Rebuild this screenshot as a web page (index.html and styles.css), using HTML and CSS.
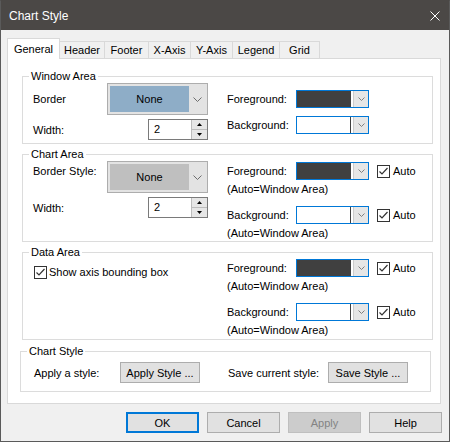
FILE: index.html
```html
<!DOCTYPE html>
<html>
<head>
<meta charset="utf-8">
<title>Chart Style</title>
<link rel="stylesheet" href="styles.css">
</head>
<body>
<div class="window">
  <div class="titlebar">
    <span class="title">Chart Style</span>
    <svg class="close" width="10" height="10" viewBox="0 0 10 10"><path d="M0.5 0.5 L9.5 9.5 M9.5 0.5 L0.5 9.5" stroke="#ffffff" stroke-width="1" fill="none"/></svg>
  </div>
  <div class="content">
    <div class="tabs">
      <div class="tab active t-general">General</div>
      <div class="tab t-header">Header</div>
      <div class="tab t-footer">Footer</div>
      <div class="tab t-x">X-Axis</div>
      <div class="tab t-y">Y-Axis</div>
      <div class="tab t-legend">Legend</div>
      <div class="tab t-grid">Grid</div>
    </div>
    <div class="panel">
      <fieldset class="group g-window">
        <legend>Window Area</legend>
        <div class="cols">
          <div class="left">
            <div class="row combo-row">
              <span class="lbl-l">Border</span>
              <div class="style-combo">
                <div class="swatch blue">None</div>
                <div class="chev-area"><svg width="9" height="5" viewBox="0 0 9 5"><path d="M0.5 0.5 L4.5 4.5 L8.5 0.5" fill="none" stroke="#6d6d6d"/></svg></div>
              </div>
            </div>
            <div class="row width-row">
              <span>Width:</span>
              <div class="spin">
                <span class="spin-val">2</span>
                <div class="spin-btns">
                  <div class="sb up"><svg width="5" height="3" viewBox="0 0 5 3"><path d="M2.5 0 L5 3 L0 3 Z" fill="#000"/></svg></div>
                  <div class="sb down"><svg width="5" height="3" viewBox="0 0 5 3"><path d="M0 0 L5 0 L2.5 3 Z" fill="#000"/></svg></div>
                </div>
              </div>
            </div>
          </div>
          <div class="right">
            <div class="crow">
              <span class="lbl-r">Foreground:</span>
              <div class="color-combo"><div class="cswatch dark"></div><div class="drop"><svg width="7" height="4" viewBox="0 0 7 4"><path d="M0.5 0.5 L3.5 3.5 L6.5 0.5" fill="none" stroke="#7f7f7f"/></svg></div></div>
            </div>
            <div class="crow w-second">
              <span class="lbl-r">Background:</span>
              <div class="color-combo"><div class="cswatch light"></div><div class="drop"><svg width="7" height="4" viewBox="0 0 7 4"><path d="M0.5 0.5 L3.5 3.5 L6.5 0.5" fill="none" stroke="#7f7f7f"/></svg></div></div>
            </div>
          </div>
        </div>
      </fieldset>

      <fieldset class="group g-chart">
        <legend>Chart Area</legend>
        <div class="cols">
          <div class="left">
            <div class="row combo-row top">
              <span class="lbl-l">Border Style:</span>
              <div class="style-combo">
                <div class="swatch gray">None</div>
                <div class="chev-area"><svg width="9" height="5" viewBox="0 0 9 5"><path d="M0.5 0.5 L4.5 4.5 L8.5 0.5" fill="none" stroke="#6d6d6d"/></svg></div>
              </div>
            </div>
            <div class="row width-row">
              <span>Width:</span>
              <div class="spin">
                <span class="spin-val">2</span>
                <div class="spin-btns">
                  <div class="sb up"><svg width="5" height="3" viewBox="0 0 5 3"><path d="M2.5 0 L5 3 L0 3 Z" fill="#000"/></svg></div>
                  <div class="sb down"><svg width="5" height="3" viewBox="0 0 5 3"><path d="M0 0 L5 0 L2.5 3 Z" fill="#000"/></svg></div>
                </div>
              </div>
            </div>
          </div>
          <div class="right">
            <div class="crow">
              <span class="lbl-r">Foreground:</span>
              <div class="color-combo"><div class="cswatch dark"></div><div class="drop"><svg width="7" height="4" viewBox="0 0 7 4"><path d="M0.5 0.5 L3.5 3.5 L6.5 0.5" fill="none" stroke="#7f7f7f"/></svg></div></div>
              <span class="chk"><svg width="11" height="11" viewBox="0 0 11 11"><path d="M1.5 5.5 L4 8 L9.5 2" fill="none" stroke="#333" stroke-width="1.2"/></svg></span>
              <span class="chk-lbl">Auto</span>
            </div>
            <div class="note">(Auto=Window Area)</div>
            <div class="crow second">
              <span class="lbl-r">Background:</span>
              <div class="color-combo"><div class="cswatch light"></div><div class="drop"><svg width="7" height="4" viewBox="0 0 7 4"><path d="M0.5 0.5 L3.5 3.5 L6.5 0.5" fill="none" stroke="#7f7f7f"/></svg></div></div>
              <span class="chk"><svg width="11" height="11" viewBox="0 0 11 11"><path d="M1.5 5.5 L4 8 L9.5 2" fill="none" stroke="#333" stroke-width="1.2"/></svg></span>
              <span class="chk-lbl">Auto</span>
            </div>
            <div class="note">(Auto=Window Area)</div>
          </div>
        </div>
      </fieldset>

      <fieldset class="group g-data">
        <legend>Data Area</legend>
        <div class="cols">
          <div class="left">
            <div class="row check-row">
              <span class="chk"><svg width="11" height="11" viewBox="0 0 11 11"><path d="M1.5 5.5 L4 8 L9.5 2" fill="none" stroke="#333" stroke-width="1.2"/></svg></span>
              <span class="chk-text">Show axis bounding box</span>
            </div>
          </div>
          <div class="right">
            <div class="crow">
              <span class="lbl-r">Foreground:</span>
              <div class="color-combo"><div class="cswatch dark"></div><div class="drop"><svg width="7" height="4" viewBox="0 0 7 4"><path d="M0.5 0.5 L3.5 3.5 L6.5 0.5" fill="none" stroke="#7f7f7f"/></svg></div></div>
              <span class="chk"><svg width="11" height="11" viewBox="0 0 11 11"><path d="M1.5 5.5 L4 8 L9.5 2" fill="none" stroke="#333" stroke-width="1.2"/></svg></span>
              <span class="chk-lbl">Auto</span>
            </div>
            <div class="note">(Auto=Window Area)</div>
            <div class="crow second">
              <span class="lbl-r">Background:</span>
              <div class="color-combo"><div class="cswatch light"></div><div class="drop"><svg width="7" height="4" viewBox="0 0 7 4"><path d="M0.5 0.5 L3.5 3.5 L6.5 0.5" fill="none" stroke="#7f7f7f"/></svg></div></div>
              <span class="chk"><svg width="11" height="11" viewBox="0 0 11 11"><path d="M1.5 5.5 L4 8 L9.5 2" fill="none" stroke="#333" stroke-width="1.2"/></svg></span>
              <span class="chk-lbl">Auto</span>
            </div>
            <div class="note">(Auto=Window Area)</div>
          </div>
        </div>
      </fieldset>

      <fieldset class="group g-style">
        <legend>Chart Style</legend>
        <div class="style-row">
          <span class="lbl-apply">Apply a style:</span>
          <button class="btn btn-sm">Apply Style ...</button>
          <span class="lbl-save">Save current style:</span>
          <button class="btn btn-sm">Save Style ...</button>
        </div>
      </fieldset>
    </div>
    <div class="buttons">
      <button class="btn btn-main default">OK</button>
      <button class="btn btn-main">Cancel</button>
      <button class="btn btn-main disabled">Apply</button>
      <button class="btn btn-main">Help</button>
    </div>
  </div>
</div>
</body>
</html>
```

FILE: styles.css
```css
* { box-sizing: border-box; }
html, body { margin: 0; padding: 0; }
body {
  width: 450px;
  height: 442px;
  overflow: hidden;
  background: #f0f0f0;
  font-family: "Liberation Sans", Arial, sans-serif;
  font-size: 11px;
  color: #000;
}
.window {
  width: 450px;
  height: 442px;
  border: 1px solid #5a5a5a;
  border-top-color: #4b4846;
  background: #f0f0f0;
  display: flex;
  flex-direction: column;
}
.titlebar {
  height: 29px;
  flex: none;
  background: #4b4846;
  color: #fff;
  display: flex;
  align-items: center;
  justify-content: space-between;
  padding: 0 9px 0 8px;
  font-size: 12px;
}
.close { display: block; }
.content { padding: 8px 8px 0 6px; }

.tabs { display: flex; align-items: flex-end; height: 20px; }
.tab {
  height: 17px;
  border: 1px solid #d9d9d9;
  border-bottom: none;
  margin-left: -1px;
  background: #f0f0f0;
  display: flex;
  align-items: center;
  justify-content: center;
  line-height: 15px;
}
.tab.active {
  height: 21px;
  margin-left: 0;
  margin-bottom: -1px;
  background: #fff;
  position: relative;
  z-index: 1;
}
.t-general { width: 53px; }
.t-header { width: 46px; }
.t-footer { width: 45px; }
.t-x { width: 43px; }
.t-y { width: 43px; }
.t-legend { width: 48px; }
.t-grid { width: 41px; }

.panel {
  height: 346px;
  background: #fff;
  border: 1px solid #d9d9d9;
  padding-top: 10px;
}

.group {
  margin: 0 0 0 14px;
  width: 411px;
  min-width: 0;
  border: 1px solid #dcdcdc;
  padding: 0 0 0 6px;
}
.group legend {
  padding: 0 2px;
  height: 14px;
  line-height: 14px;
}
.g-chart, .g-data { margin-top: 3px; }
.g-style { margin-top: 4px; margin-left: 12px; }

.cols { display: flex; }
.left { width: 198px; padding-left: 4px; }
.right { flex: 1; }
.row { display: flex; align-items: center; }
.combo-row { height: 32px; }
.combo-row.top { align-items: flex-start; }
.combo-row.top .lbl-l { padding-top: 2px; }
.lbl-l { width: 74px; line-height: 16px; }
.width-row { width: 175px; justify-content: space-between; margin-top: 4px; }
.g-window .left { padding-bottom: 3px; }

.style-combo {
  width: 101px;
  height: 32px;
  border: 1px solid #adadad;
  background: #e3e3e3;
  padding: 2px;
  display: flex;
  align-items: center;
}
.swatch {
  width: 79px;
  height: 26px;
  display: flex;
  align-items: center;
  justify-content: center;
}
.swatch.blue { background: #8eadc7; }
.swatch.gray { background: #bfbfbf; }
.chev-area { flex: 1; display: flex; justify-content: center; align-items: center; padding-left: 1px; }
.chev-area svg, .drop svg, .sb svg, .chk svg { display: block; }

.spin {
  width: 60px;
  height: 21px;
  border: 1px solid #7a7a7a;
  background: #fff;
  display: flex;
}
.spin-val { padding-left: 5px; line-height: 19px; }
.spin-btns {
  margin-left: auto;
  width: 16px;
  display: flex;
  flex-direction: column;
  background: #e6e6e6;
  border-left: 1px solid #bcbcbc;
}
.sb { flex: 1; display: flex; align-items: center; justify-content: center; }
.sb.down { border-top: 1px solid #bcbcbc; }

.crow { display: flex; align-items: center; height: 18px; }
.lbl-r { width: 69px; }
.g-window .right { padding-top: 7px; }
.w-second { margin-top: 8px; }
.g-chart .right { padding-top: 1px; }
.g-data .right { padding-bottom: 1px; }
.crow.second { margin-top: 9px; }
.note { line-height: 16px; margin-top: 1px; }

.color-combo {
  width: 73px;
  height: 18px;
  border: 1px solid #0078d7;
  background: #fff;
  display: flex;
}
.cswatch { width: 54px; height: 100%; }
.cswatch.dark { background: #404040; }
.cswatch.light { background: #fff; border-right: 1px solid #404040; }
.drop {
  margin-left: 2px;
  width: 15px;
  background: #e6e6e6;
  border-left: 1px solid #cccccc;
  display: flex;
  align-items: center;
  justify-content: center;
}

.chk {
  width: 13px;
  height: 13px;
  border: 1px solid #333;
  background: #fff;
  display: flex;
  align-items: center;
  justify-content: center;
  flex: none;
}
.crow .chk { margin-left: 8px; }
.chk-lbl { margin-left: 3px; }
.check-row { height: 16px; margin-top: 5px; padding-left: 1px; }
.chk-text { margin-left: 2px; }

.style-row {
  display: flex;
  align-items: center;
  padding: 4px 0 8px 7px;
}
.lbl-apply { width: 86px; }
.lbl-save { width: 100px; margin-left: 28px; }

.btn {
  height: 21px;
  padding: 0;
  border: 1px solid #adadad;
  background: #e1e1e1;
  font-family: inherit;
  font-size: 11px;
  color: #000;
}
.btn-sm { width: 80px; }
.btn-main { width: 73px; }
.btn.default { border: 2px solid #0078d7; }
.btn.disabled { background: #cccccc; border-color: #bfbfbf; color: #838383; }
.buttons {
  display: flex;
  justify-content: flex-end;
  gap: 8px;
  margin-top: 8px;
  margin-right: -1px;
}
```
